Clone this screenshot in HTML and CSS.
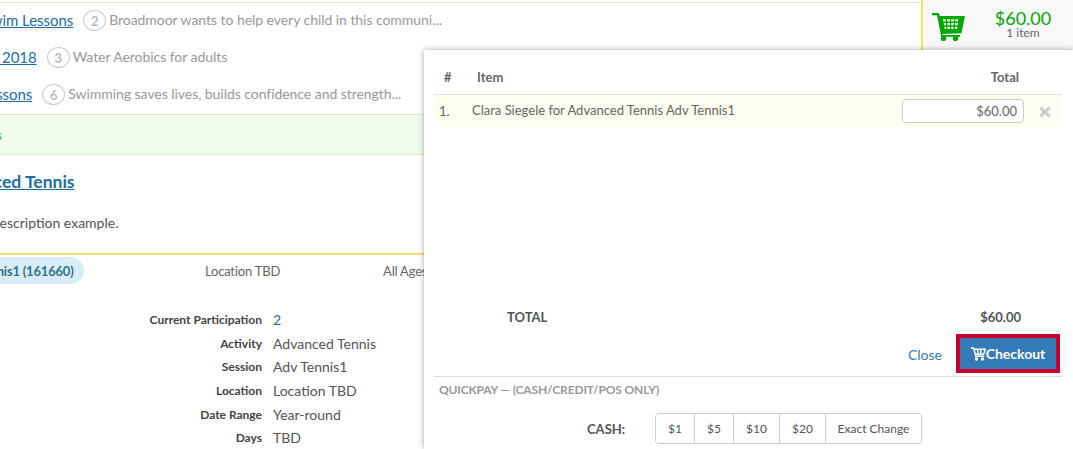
FILE: index.html
```html
<!DOCTYPE html>
<html lang="en">
<head>
<meta charset="utf-8">
<title>Cart</title>
<link rel="stylesheet" href="styles.css">
</head>
<body>
<div class="page">
  <main class="main">
    <ul class="programs">
      <li class="program program-a"><a href="#">Youth Swim Lessons</a><span class="count">2</span><span class="desc">Broadmoor wants to help every child in this communi...</span></li>
      <li class="program program-b"><a href="#">Water Aerobics 2018</a><span class="count">3</span><span class="desc">Water Aerobics for adults</span></li>
      <li class="program program-c"><a href="#">Swim Lessons</a><span class="count">6</span><span class="desc">Swimming saves lives, builds confidence and strength...</span></li>
    </ul>
    <div class="band"><span class="band-text">Tennis</span></div>
    <h2 class="title"><a href="#">Advanced Tennis</a></h2>
    <p class="summary">Description example.</p>
    <div class="session-row">
      <span class="pill">Adv Tennis1 (161660)</span>
      <span class="session-loc">Location TBD</span>
      <span class="session-age">All Ages</span>
    </div>
    <dl class="details">
      <dt>Current Participation</dt><dd class="link-val">2</dd>
      <dt>Activity</dt><dd>Advanced Tennis</dd>
      <dt>Session</dt><dd>Adv Tennis1</dd>
      <dt>Location</dt><dd>Location TBD</dd>
      <dt>Date Range</dt><dd>Year-round</dd>
      <dt>Days</dt><dd>TBD</dd>
    </dl>
  </main>
  <aside class="cart">
    <svg class="cart-icon" viewBox="0 0 33 28" aria-hidden="true">
      <path class="cart-fill" fill-rule="evenodd" d="M0 0h6.500l1.500 3h25l-3.600 17.200-19 .8.300 1H28v1.800H9.200L5 2.300H0zM11 6.200l.4 2.200H14L13.800 6.200zm4.100 0 .2 2.200H18V6.200zm4.100 0v2.200H22l.2-2.200zm4.200 0-.3 2.200h2.800l.5-2.200zM11.700 10l.4 2.200h2.100l-.2-2.200zm3.600 0 .2 2.200H18V10zm3.900 0v2.200h2.600l.2-2.200zm4 0-.2 2.200h2.500l.5-2.200zM12.400 13.800l.4 2.200h1.600l-.1-2.200zm3.100 0 .1 2.200H18v-2.200zm3.700 0v2.200h2.300l.2-2.200zm3.800 0-.2 2.200h2.200l.5-2.200z"/>
      <circle class="cart-fill" cx="11.500" cy="25.200" r="2.800"/>
      <circle class="cart-fill" cx="23.500" cy="25.200" r="2.800"/>
    </svg>
    <div class="cart-sum">
      <div class="cart-amount">$60.00</div>
      <div class="cart-items">1 item</div>
    </div>
  </aside>
</div>
<section class="popover">
  <div class="pop-head">
    <span class="col-num">#</span>
    <span class="col-item">Item</span>
    <span class="col-total">Total</span>
  </div>
  <div class="pop-row">
    <span class="row-num">1.</span>
    <span class="row-item">Clara Siegele for Advanced Tennis Adv Tennis1</span>
    <input class="row-input" type="text" value="$60.00">
    <svg class="row-x" viewBox="0 0 12 12" aria-hidden="true"><path d="M2.500 .5 6 3.800 9.500 .5 11.700 2.700 8.300 6l3.400 3.300-2.200 2.200L6 8.200l-3.500 3.300L.3 9.300 3.700 6 .3 2.700z"/></svg>
  </div>
  <div class="pop-total"><span>TOTAL</span><span class="pop-total-val">$60.00</span></div>
  <div class="pop-actions">
    <a class="close-link" href="#">Close</a>
    <span class="checkout-ring">
      <button class="checkout" type="button">
        <svg class="checkout-icon" viewBox="0 0 15 14" aria-hidden="true"><path class="checkout-line" d="M0 1h2.600l2.200 8.300h8.400M3.300 2.200h11l-1.600 5H4.500M6.600 2.200l.5 5M10 2.200l-.4 5"/><circle cx="5.500" cy="12" r="1.700"/><circle cx="11.500" cy="12" r="1.700"/></svg>Checkout
      </button>
    </span>
  </div>
  <div class="quick-title">QUICKPAY — (CASH/CREDIT/POS ONLY)</div>
  <div class="quick-row">
    <span class="quick-label">CASH:</span>
    <div class="btn-group">
      <button type="button">$1</button><button type="button">$5</button><button type="button">$10</button><button type="button">$20</button><button type="button" class="exact">Exact Change</button>
    </div>
  </div>
</section>
</body>
</html>
```

FILE: styles.css
```css
* { box-sizing: border-box; }
html, body { margin: 0; padding: 0; height: 449px; overflow: hidden; background: #fff; }
body { font-family: Lato, "Open Sans", sans-serif; font-size: 14px; color: #555; position: relative; }
a { color: #1a6fa3; }

.page { display: flex; width: 1073px; height: 449px; }
.main { width: 921px; flex: none; overflow: hidden; padding-top: 2px; }

.programs { list-style: none; margin: 0; padding: 0; height: 112px; border-top: 1px solid #dcedc8; }
.program { height: 37px; display: flex; align-items: center; white-space: nowrap; font-size: 14px; letter-spacing: -.05px; color: #999; }
.program:first-child { margin-top: -1px; }
.program a { font-size: 15px; position: relative; top: -1px; }
.desc { position: relative; top: -1px; }
.program-a { margin-left: -59px; }
.program-b { margin-left: -102px; }
.program-c { margin-left: -58px; }
.count { width: 23px; height: 21px; border: 1.500px solid #ccc; border-radius: 50%; display: flex; align-items: center; justify-content: center; font-size: 13px; font-weight: 700; color: #bbb; margin: 0 3px 0 10px; flex: none; }

.band { height: 41px; background: #f2fceb; border-top: 1px solid #d6edc0; border-bottom: 1px solid #d6edc0; display: flex; align-items: center; margin-left: -40px; font-size: 14px; font-weight: 700; color: #5cb85c; }
.band-text { width: 42px; text-align: right; overflow: hidden; }

.title { margin: 16px 0 0 -56px; font-size: 17.500px; font-weight: 700; line-height: 22px; white-space: nowrap; }
.summary { margin: 20px 0 0 -11px; font-size: 14px; line-height: 20px; white-space: nowrap; color: #555; }

.session-row { margin-top: 20px; border-top: 2px solid #f5dd70; height: 32px; display: flex; align-items: center; white-space: nowrap; padding-top: 1px; font-size: 13px; letter-spacing: -.2px; }
.pill { background: #d9edf7; color: #31708f; font-weight: 700; height: 27px; display: flex; align-items: center; border-radius: 14px; padding: 1px 8px 0 25px; margin-left: -73px; flex: none; width: 157px; }
.session-loc { margin-left: 121px; color: #666; }
.session-age { margin-left: 103px; color: #666; }

.details { margin: 23px 0 0; display: grid; grid-template-columns: 263px auto; grid-auto-rows: 23.600px; column-gap: 10px; align-items: center; }
.details dt { font-size: 12px; font-weight: 700; color: #444; text-align: right; position: relative; left: -1px; }
.details dd { margin: 0; color: #555; }
.details .link-val { color: #1a6fa3; }

.cart { flex: 1; height: 100%; background: #f8f8f8; border-left: 2px solid #f7e94b; display: flex; align-items: flex-start; padding: 13px 0 0 9px; }
.cart-icon { width: 33px; height: 28px; flex: none; }
.cart-fill { fill: #04a804; }
.cart-sum { margin-left: 15px; width: 86px; text-align: center; margin-top: -3px; }
.cart-amount { font-size: 18px; line-height: 16px; color: #04a804; }
.cart-items { font-size: 12px; line-height: 11px; margin-top: 1px; color: #666; }

.popover { position: absolute; left: 424px; top: 50px; width: 649px; height: 399px; background: #fff; box-shadow: 0 0 6px rgba(0,0,0,.35); padding: 0 11px 0 10px; }
.pop-head { display: flex; height: 45px; align-items: center; padding-top: 9px; font-size: 13px; font-weight: 700; color: #666; border-bottom: 1px solid #ddd; }
.col-num { width: 43px; padding-left: 10px; }
.col-item { flex: 1; }
.col-total { margin-right: 43px; }
.pop-row { height: 32px; background: #fdfeee; display: flex; align-items: center; color: #666; font-size: 13px; }
.row-num { width: 38px; padding-left: 5px; }
.row-item { flex: 1; position: relative; top: -1px; }
.row-input { width: 122px; height: 24px; border: 1px solid #ccc; border-radius: 4px; text-align: right; font: 13px Lato, sans-serif; color: #666; padding: 0 6px; background: #fff; }
.row-x { width: 12px; height: 12px; margin: 2px 11px 0 15px; fill: #ccc; }
.pop-total { margin-top: 181px; height: 20px; display: flex; font-size: 13px; font-weight: 700; color: #555; padding: 0 0 2px 73px; align-items: center; }
.pop-total-val { margin-left: auto; margin-right: 41px; }
.pop-actions { height: 44px; display: flex; align-items: center; justify-content: flex-end; margin-top: 5px; border-bottom: 1px solid #ddd; padding: 0 2px 2px 0; }
.close-link { color: #337ab7; text-decoration: none; font-size: 14px; margin: 2px 14px 0 0; }
.checkout-ring { border: 4px solid #c8002a; display: block; height: 39px; width: 104px; }
.checkout { width: 100%; height: 100%; border: 0; background: #337ab7; color: #fff; font: 700 14px Lato, sans-serif; display: flex; align-items: center; justify-content: center; padding: 0; }
.checkout-icon { width: 15px; height: 14px; fill: #fff; }
.checkout-line { fill: none; stroke: #fff; stroke-width: 1.400; }
.quick-title { font-size: 12px; font-weight: 700; color: #999; margin: 6px 0 0 5px; line-height: 14px; letter-spacing: -.15px; }
.quick-row { display: flex; align-items: center; margin-top: 16px; padding-left: 153px; }
.quick-label { width: 68px; font-size: 13px; font-weight: 700; color: #555; }
.btn-group { display: flex; height: 31px; border: 1px solid #ccc; border-radius: 4px; }
.btn-group button { border: 0; border-right: 1px solid #ccc; background: #fff; font: 12px Lato, sans-serif; color: #555; padding: 0; width: 39px; }
.btn-group button:nth-child(3), .btn-group button:nth-child(4) { width: 46px; }
.btn-group button.exact { width: 95px; border-right: 0; border-radius: 0 4px 4px 0; }
.btn-group button:first-child { border-radius: 4px 0 0 4px; }
```
